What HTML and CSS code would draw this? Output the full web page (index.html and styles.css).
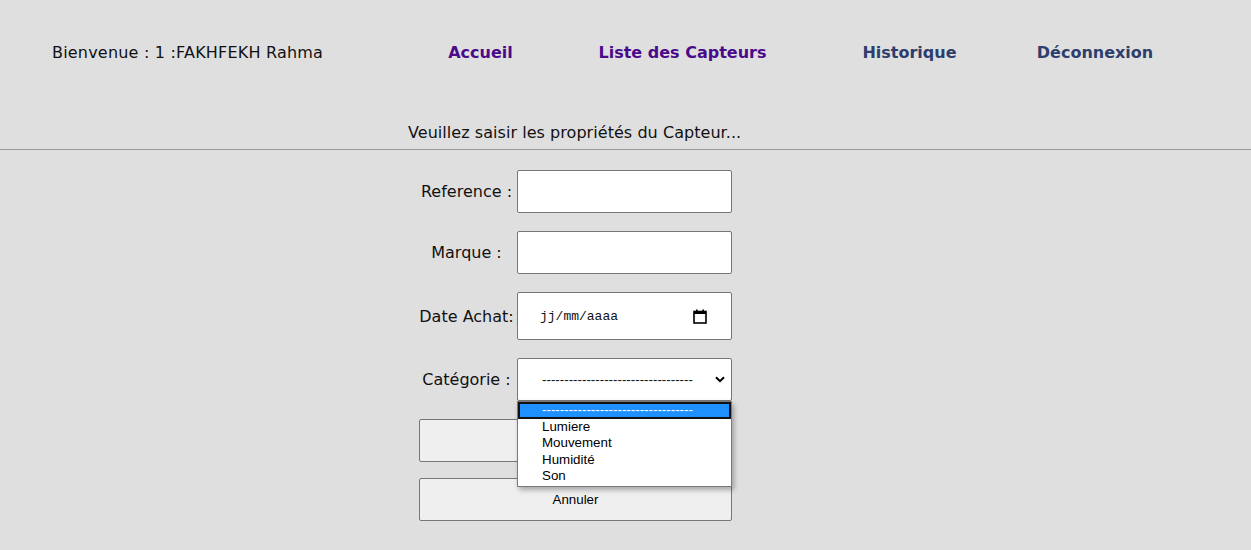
FILE: index.html
```html
<!DOCTYPE html>
<html lang="fr">
<head>
<meta charset="utf-8">
<title>Ajouter un Capteur</title>
<link rel="stylesheet" href="styles.css">
</head>
<body>
<header class="topbar">
  <div class="welcome">Bienvenue : 1 :FAKHFEKH Rahma</div>
  <a class="nav-link visited" href="#">Accueil</a>
  <a class="nav-link visited" href="#">Liste des Capteurs</a>
  <a class="nav-link" href="#">Historique</a>
  <a class="nav-link" href="#">Déconnexion</a>
</header>

<p class="subtitle">Veuillez saisir les propriétés du Capteur...</p>
<div class="rule"></div>

<form class="sensor-form">
  <div class="fields">
    <label class="field-label">Reference :</label>
    <input class="text-input" type="text">

    <label class="field-label">Marque :</label>
    <input class="text-input" type="text">

    <label class="field-label">Date Achat:</label>
    <div class="date-input">
      <span class="date-placeholder">jj/mm/aaaa</span>
      <svg class="cal-icon" width="14" height="15" viewBox="0 0 14 15" aria-hidden="true">
        <rect x="1" y="2.5" width="12" height="11.5" fill="none" stroke="#000" stroke-width="1.6"/>
        <rect x="1" y="2" width="12" height="3" fill="#000"/>
        <rect x="3" y="0.5" width="1.6" height="2.5" fill="#000"/>
        <rect x="9.4" y="0.5" width="1.6" height="2.5" fill="#000"/>
      </svg>
    </div>

    <label class="field-label">Catégorie :</label>
    <div class="select-wrap">
      <div class="select-box">
        <span class="select-value">----------------------------------</span>
        <svg class="chev" width="10" height="7" viewBox="0 0 10 7" aria-hidden="true">
          <path d="M1 1.2 L5 5.2 L9 1.2" fill="none" stroke="#000" stroke-width="2"/>
        </svg>
      </div>
      <ul class="dropdown">
        <li class="opt selected">----------------------------------</li>
        <li class="opt">Lumiere</li>
        <li class="opt">Mouvement</li>
        <li class="opt">Humidité</li>
        <li class="opt">Son</li>
      </ul>
    </div>
  </div>

  <div class="actions">
    <button class="btn" type="button" aria-label="Ajouter"></button>
    <button class="btn" type="reset">Annuler</button>
  </div>
</form>
</body>
</html>
```

FILE: styles.css
```css
html, body {
  margin: 0;
  padding: 0;
}

body {
  background: #e0dfe0;
  font-family: "DejaVu Sans", Verdana, sans-serif;
  font-size: 16px;
  color: #111;
}

.topbar {
  display: grid;
  grid-template-columns: 348px 161px 243px 211px 160px;
  align-items: center;
  height: 104px;
  padding-left: 52px;
}

.welcome {
  white-space: nowrap;
  letter-spacing: 0.2px;
}

.nav-link {
  text-align: center;
  font-weight: bold;
  text-decoration: none;
  color: #2d3e6c;
  white-space: nowrap;
}

.nav-link.visited {
  color: #4a0a8a;
}

.subtitle {
  margin: 19px 0 0 0;
  padding-left: 408px;
  line-height: 19px;
  letter-spacing: 0.05px;
}

.rule {
  margin-top: 7px;
  height: 0;
  border-top: 1px solid #9b9b9b;
}

.sensor-form {
  margin: 20px 0 0 419px;
  width: 313px;
}

.fields {
  display: grid;
  grid-template-columns: 95px 215px;
  column-gap: 3px;
  row-gap: 18px;
  align-items: center;
}

.field-label {
  text-align: center;
  white-space: nowrap;
}

.text-input {
  box-sizing: border-box;
  width: 215px;
  height: 43px;
  margin: 0;
  border: 1px solid #767676;
  border-radius: 2px;
  background: #fff;
  font-size: 13px;
}

.date-input {
  box-sizing: border-box;
  width: 215px;
  height: 48px;
  border: 1px solid #767676;
  border-radius: 2px;
  background: #fff;
  display: flex;
  align-items: center;
  justify-content: space-between;
  padding: 0 24px 0 22px;
}

.date-placeholder {
  font-family: "Liberation Mono", "DejaVu Sans Mono", monospace;
  font-size: 13px;
  color: #111;
}

.cal-icon {
  display: block;
}

.select-wrap {
  position: relative;
}

.select-box {
  box-sizing: border-box;
  width: 215px;
  height: 43px;
  border: 1px solid #767676;
  border-radius: 2px;
  background: #fff;
  display: flex;
  align-items: center;
  justify-content: space-between;
  padding: 0 6px 0 24px;
  font-family: "Liberation Sans", Arial, sans-serif;
  font-size: 13.33px;
}

.chev {
  display: block;
}

.dropdown {
  position: absolute;
  top: 100%;
  left: 0;
  box-sizing: border-box;
  width: 215px;
  margin: 0;
  padding: 0 0 2px 0;
  list-style: none;
  background: #fff;
  border: 1px solid #7a7a7a;
  box-shadow: 2px 3px 5px rgba(0, 0, 0, 0.3);
  font-family: "Liberation Sans", Arial, sans-serif;
  font-size: 13.33px;
  color: #000;
  z-index: 5;
}

.opt {
  height: 16.25px;
  line-height: 16.25px;
  padding-left: 24px;
  white-space: nowrap;
}

.opt.selected {
  box-sizing: border-box;
  background: #1e90ff;
  color: #fff;
  border: 2px solid #111;
  padding-left: 22px;
  line-height: 12.25px;
  height: 17px;
}

.actions {
  display: flex;
  flex-direction: column;
  gap: 16px;
  margin-top: 18px;
}

.btn {
  box-sizing: border-box;
  width: 313px;
  height: 43px;
  margin: 0;
  border: 1px solid #767676;
  border-radius: 2px;
  background: #efefef;
  font-family: "Liberation Sans", Arial, sans-serif;
  font-size: 13.33px;
  color: #000;
}
```
